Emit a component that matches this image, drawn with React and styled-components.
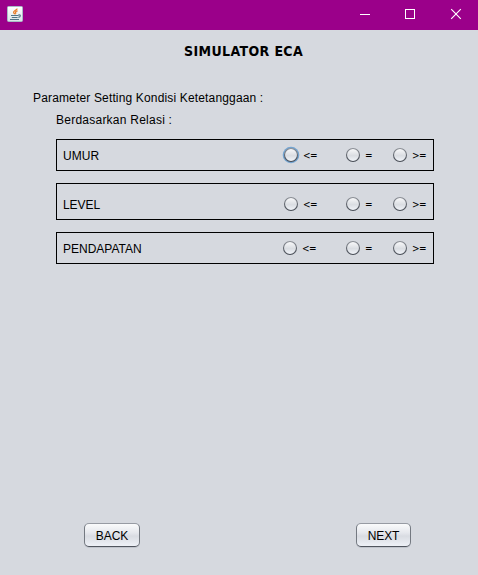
import React from "react";
import styled, { createGlobalStyle } from "styled-components";

const GlobalStyle = createGlobalStyle`
  * { box-sizing: border-box; }
  body { margin: 0; background: #d6d9df; }
`;

const Window = styled.div`
  display: flex;
  flex-direction: column;
  width: 478px;
  height: 575px;
  background: #d6d9df;
  color: #000;
  font: 12px/16px "Liberation Sans", Arial, sans-serif;
`;

const TitleBar = styled.header`
  display: flex;
  justify-content: space-between;
  height: 30px;
  flex: none;
  background: #9b008a;
`;

const AppIcon = styled.svg`
  display: block;
  margin: 6px 0 0 7px;
`;

const Controls = styled.div`
  display: flex;
`;

const ControlButton = styled.button`
  display: flex;
  align-items: flex-start;
  justify-content: center;
  width: ${(p) => p.$width}px;
  height: 30px;
  margin: 0;
  padding: 8px 0 0;
  border: 0;
  background: transparent;
  svg { display: block; }
`;

const Content = styled.main`
  display: flex;
  flex: 1;
  flex-direction: column;
`;

const Title = styled.h1`
  margin: 13px 0 0 184px;
  font: bold 14px/16px "DejaVu Sans Condensed", "DejaVu Sans", sans-serif;
  font-stretch: condensed;
  letter-spacing: 0.38px;
  white-space: nowrap;
`;

const Caption = styled.p`
  margin: ${(p) => p.$top}px 0 0 ${(p) => p.$left}px;
  letter-spacing: ${(p) => p.$spacing}px;
  white-space: nowrap;
`;

const Groups = styled.div`
  display: flex;
  flex-direction: column;
  margin: 11px 44px 0 56px;
`;

const Group = styled.section`
  display: grid;
  grid-template-columns: ${(p) => 225 - p.$shift}px ${(p) => 62 + p.$shift}px 47px 1fr;
  height: ${(p) => p.$height}px;
  margin-bottom: ${(p) => p.$gap}px;
  padding: ${(p) => p.$pad}px 0 0 0;
  border: 1px solid #000;
`;

const Name = styled.span`
  padding: 1px 0 0 6px;
  letter-spacing: ${(p) => p.$spacing}px;
`;

const Option = styled.label`
  display: flex;
  align-items: flex-start;
  gap: 3px;
  white-space: nowrap;
  svg { flex: none; margin-top: -1px; }
`;

const Symbol = styled.span`
  margin-top: 1px;
  font: 10px/16px "DejaVu Sans Condensed", "DejaVu Sans", sans-serif;
  font-stretch: condensed;
  letter-spacing: -0.6px;
`;

const Footer = styled.footer`
  display: flex;
  justify-content: space-between;
  margin: auto 67px 28px 84px;
`;

const PushButton = styled.button`
  width: ${(p) => p.$width}px;
  height: 24px;
  margin: 0;
  padding: 1px 0 0;
  border: 1px solid;
  border-color: #979ba3 #747981 #50555e;
  border-radius: 5px;
  background: linear-gradient(#fafbfc 0%, #e6e8ed 40%, #d9dce2 55%, #eef1f7 100%);
  box-shadow: 0 1px 0 #c0c4cc;
  color: #000;
  font: 12px/16px "Liberation Sans", Arial, sans-serif;
  letter-spacing: ${(p) => p.$spacing}px;
`;

function JavaIcon() {
  return (
    <AppIcon width="16" height="16" viewBox="0 0 16 16" fill="none">
      <defs>
        <linearGradient id="tile" x2="0" y2="1">
          <stop stopColor="#fff" />
          <stop offset="1" stopColor="#d9e4e8" />
        </linearGradient>
      </defs>
      <rect x=".5" y=".5" width="15" height="15" rx="1" fill="url(#tile)" stroke="#a9bcc6" />
      <path d="M10.3 2.6C9.8 4.2 6 4.8 6.6 6.6L7.8 8.2M10.6 4.9C8.4 5.4 8 6.2 8.8 7L8.3 8.3" stroke="#e87a24" strokeWidth="1.2" />
      <path d="M4 9.5H11.4M11.3 9C14.4 8.2 13.6 11.2 11.2 11.3M4.8 11.5H10.6M3 13.5H12" stroke="#527486" strokeWidth="1.1" />
    </AppIcon>
  );
}

function Radio({ focused }) {
  const id = React.useId();
  return (
    <svg width="18" height="18" viewBox="0 0 18 18">
      <defs>
        <linearGradient id={`${id}face`} x2="0" y2="1">
          <stop stopColor="#fafafb" />
          <stop offset=".55" stopColor="#dadde2" />
          <stop offset="1" stopColor="#f3f6fb" />
        </linearGradient>
        <linearGradient id={`${id}rim`} x2="0" y2="1">
          <stop stopColor="#8a8e95" />
          <stop offset="1" stopColor="#454a53" />
        </linearGradient>
      </defs>
      {focused && <circle cx="9" cy="9" r="8.3" fill="#73a4d1" />}
      <circle cx="9" cy="9" r="6.5" fill={`url(#${id}face)`} stroke={`url(#${id}rim)`} strokeWidth="1.1" />
    </svg>
  );
}

const groups = [
  { name: "UMUR", height: 32, gap: 12, pad: 7, shift: 0, spacing: 0.05 },
  { name: "LEVEL", height: 37, gap: 12, pad: 12, shift: 0, spacing: -0.05 },
  { name: "PENDAPATAN", height: 32, gap: 0, pad: 7, shift: 1, spacing: 0 },
];

export default function App() {
  return (
    <Window>
      <GlobalStyle />
      <TitleBar>
        <JavaIcon />
        <Controls>
          <ControlButton $width={42} aria-label="Minimize">
            <svg width="12" height="12"><path d="M1 6.5h10" stroke="#fff" /></svg>
          </ControlButton>
          <ControlButton $width={48} aria-label="Maximize">
            <svg width="12" height="12"><rect x="1.5" y="1.5" width="9" height="9" fill="none" stroke="#fff" /></svg>
          </ControlButton>
          <ControlButton $width={44} aria-label="Close">
            <svg width="12" height="12"><path d="M1.2 1.2l9.6 9.6M10.8 1.2L1.2 10.8" stroke="#fff" strokeWidth="1.15" /></svg>
          </ControlButton>
        </Controls>
      </TitleBar>
      <Content>
        <Title>SIMULATOR ECA</Title>
        <Caption $top={31} $left={33} $spacing={0.155}>Parameter Setting Kondisi Ketetanggaan :</Caption>
        <Caption $top={6} $left={56} $spacing={0.24}>Berdasarkan Relasi :</Caption>
        <Groups>
          {groups.map((g, row) => (
            <Group key={g.name} $height={g.height} $gap={g.gap} $pad={g.pad} $shift={g.shift}>
              <Name $spacing={g.spacing}>{g.name}</Name>
              {["<=", "=", ">="].map((symbol, col) => (
                <Option key={symbol}>
                  <Radio focused={row === 0 && col === 0} />
                  <Symbol>{symbol}</Symbol>
                </Option>
              ))}
            </Group>
          ))}
        </Groups>
        <Footer>
          <PushButton $width={56} $spacing={-0.05}>BACK</PushButton>
          <PushButton $width={55} $spacing={-0.1}>NEXT</PushButton>
        </Footer>
      </Content>
    </Window>
  );
}
